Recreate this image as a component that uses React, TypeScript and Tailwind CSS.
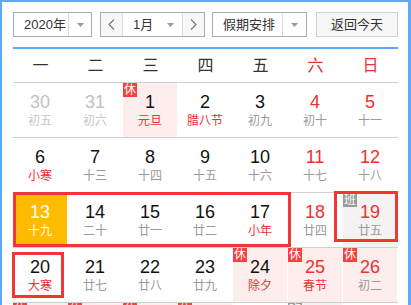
import React from "react";

type Day = {
  n: number;
  l: string;
  other?: boolean;
  red?: boolean;
  lred?: boolean;
  tag?: "休" | "班";
  today?: boolean;
};

const rows: Day[][] = [
  [
    { n: 30, l: "初五", other: true },
    { n: 31, l: "初六", other: true },
    { n: 1, l: "元旦", lred: true, tag: "休" },
    { n: 2, l: "腊八节", lred: true },
    { n: 3, l: "初九" },
    { n: 4, l: "初十", red: true },
    { n: 5, l: "十一", red: true },
  ],
  [
    { n: 6, l: "小寒", lred: true },
    { n: 7, l: "十三" },
    { n: 8, l: "十四" },
    { n: 9, l: "十五" },
    { n: 10, l: "十六" },
    { n: 11, l: "十七", red: true },
    { n: 12, l: "十八", red: true },
  ],
  [
    { n: 13, l: "十九", today: true },
    { n: 14, l: "二十" },
    { n: 15, l: "廿一" },
    { n: 16, l: "廿二" },
    { n: 17, l: "小年", lred: true },
    { n: 18, l: "廿四", red: true },
    { n: 19, l: "廿五", red: true, tag: "班" },
  ],
  [
    { n: 20, l: "大寒", lred: true },
    { n: 21, l: "廿七" },
    { n: 22, l: "廿八" },
    { n: 23, l: "廿九" },
    { n: 24, l: "除夕", lred: true, tag: "休" },
    { n: 25, l: "春节", red: true, lred: true, tag: "休" },
    { n: 26, l: "初二", red: true, tag: "休" },
  ],
  [
    { n: 27, l: "初三", tag: "休" },
    { n: 28, l: "初四", tag: "休" },
    { n: 29, l: "初五", tag: "休" },
    { n: 30, l: "初六", tag: "休" },
    { n: 31, l: "初七" },
    { n: 1, l: "初八", other: true, tag: "班" },
    { n: 2, l: "初九", other: true },
  ],
];

const weekdays = ["一", "二", "三", "四", "五", "六", "日"];

function Caret() {
  return (
    <svg width="7" height="4" viewBox="0 0 7 4">
      <polygon points="0,0 7,0 3.5,4" fill="#9a9a9a" />
    </svg>
  );
}

function Chevron({ dir }: { dir: "left" | "right" }) {
  return (
    <svg width="7" height="11" viewBox="0 0 7 11">
      <polyline
        points={dir === "left" ? "6,0.5 1,5.5 6,10.5" : "1,0.5 6,5.5 1,10.5"}
        fill="none"
        stroke="#777"
        strokeWidth="1.1"
      />
    </svg>
  );
}

function Cell({ d }: { d: Day }) {
  const bg = d.today
    ? "bg-[#ffbb00]"
    : d.tag === "休"
      ? "bg-[#fdeeed]"
      : d.tag === "班"
        ? "bg-[#f3f3f3]"
        : "bg-white";
  const numColor = d.today
    ? "text-white"
    : d.other
      ? "text-[#c2c2c2]"
      : d.red
        ? "text-[#f0302f]"
        : "text-[#111]";
  const lunarColor = d.today
    ? "text-white"
    : d.other
      ? "text-[#c6c6c6]"
      : d.lred
        ? "text-[#f0302f]"
        : "text-[#9a9a9a]";
  return (
    <div className="w-[55px] h-[54px] pr-px">
      <div className={`relative h-full flex flex-col items-center justify-center ${bg}`}>
        {d.tag && (
          <span
            className={`absolute left-0 top-0 w-[14px] h-[14px] text-[12px] leading-[14px] text-white text-center ${
              d.tag === "休" ? "bg-[#f5413d]" : "bg-[#9b9b9b]"
            }`}
          >
            {d.tag}
          </span>
        )}
        <span className={`text-[18px] leading-[22px] ${numColor}`}>{d.n}</span>
        <span className={`text-[12px] leading-[16px] whitespace-nowrap ${lunarColor}`}>{d.l}</span>
      </div>
    </div>
  );
}

export default function App() {
  return (
    <div className="relative w-[411px] h-[305px] overflow-hidden bg-white font-['Liberation_Sans','Noto_Sans_CJK_SC',sans-serif]">
      <div className="h-full border-t-2 border-l-2 border-r-[3px] border-[#5fa8f6] pt-[10px] pl-[11px] pr-[10px]">
        {/* Toolbar */}
        <div className="flex h-[25px] text-[13px] text-[#333] whitespace-nowrap">
          <div className="flex w-[79px] border border-[#ababab] bg-white">
            <div className="flex-1 flex items-center pl-[10px]">2020年</div>
            <div className="w-[23px] border-l border-[#dcdcdc] flex items-center justify-center">
              <Caret />
            </div>
          </div>

          <div className="ml-[8px] flex w-[105px] border border-[#ababab]">
            <div className="w-[22px] border-r border-[#dcdcdc] bg-[#f7f7f7] flex items-center justify-center">
              <Chevron dir="left" />
            </div>
            <div className="w-[60px] border-r border-[#dcdcdc] bg-white flex items-center pl-[10px] pr-[8px]">
              <span>1月</span>
              <span className="ml-auto flex">
                <Caret />
              </span>
            </div>
            <div className="flex-1 bg-[#f7f7f7] flex items-center justify-center">
              <Chevron dir="right" />
            </div>
          </div>

          <div className="ml-[7px] flex w-[95px] border border-[#ababab] bg-white">
            <div className="flex-1 flex items-center pl-[10px]">假期安排</div>
            <div className="w-[24px] border-l border-[#dcdcdc] flex items-center justify-center">
              <Caret />
            </div>
          </div>

          <div className="ml-[9px] w-[82px] border border-[#d0d0d0] bg-[#f7f7f7] flex items-center justify-center">
            返回今天
          </div>
        </div>

        <div className="mt-[10px] h-[2px] bg-[#5fa8f6]" />

        {/* Weekday header */}
        <div className="flex h-[34px] border-b border-[#d0d0d0] text-[16px]">
          {weekdays.map((w, i) => (
            <div
              key={w}
              className={`w-[55px] flex items-center justify-center ${i >= 5 ? "text-[#f0302f]" : "text-[#333]"}`}
            >
              {w}
            </div>
          ))}
        </div>

        {/* Day grid */}
        {rows.map((r, i) => (
          <div key={i} className="flex h-[55px] border-b border-[#d0d0d0]">
            {r.map((d, j) => (
              <Cell key={j} d={d} />
            ))}
          </div>
        ))}
      </div>

      {/* red annotation boxes */}
      <div className="absolute left-[13px] top-[192px] w-[278px] h-[55px] border-[3px] border-[#f33535]" />
      <div className="absolute left-[334px] top-[191px] w-[64px] h-[51px] border-[3px] border-[#f33535]" />
      <div className="absolute left-[12px] top-[252px] w-[52px] h-[46px] border-[3px] border-[#f33535]" />
    </div>
  );
}
